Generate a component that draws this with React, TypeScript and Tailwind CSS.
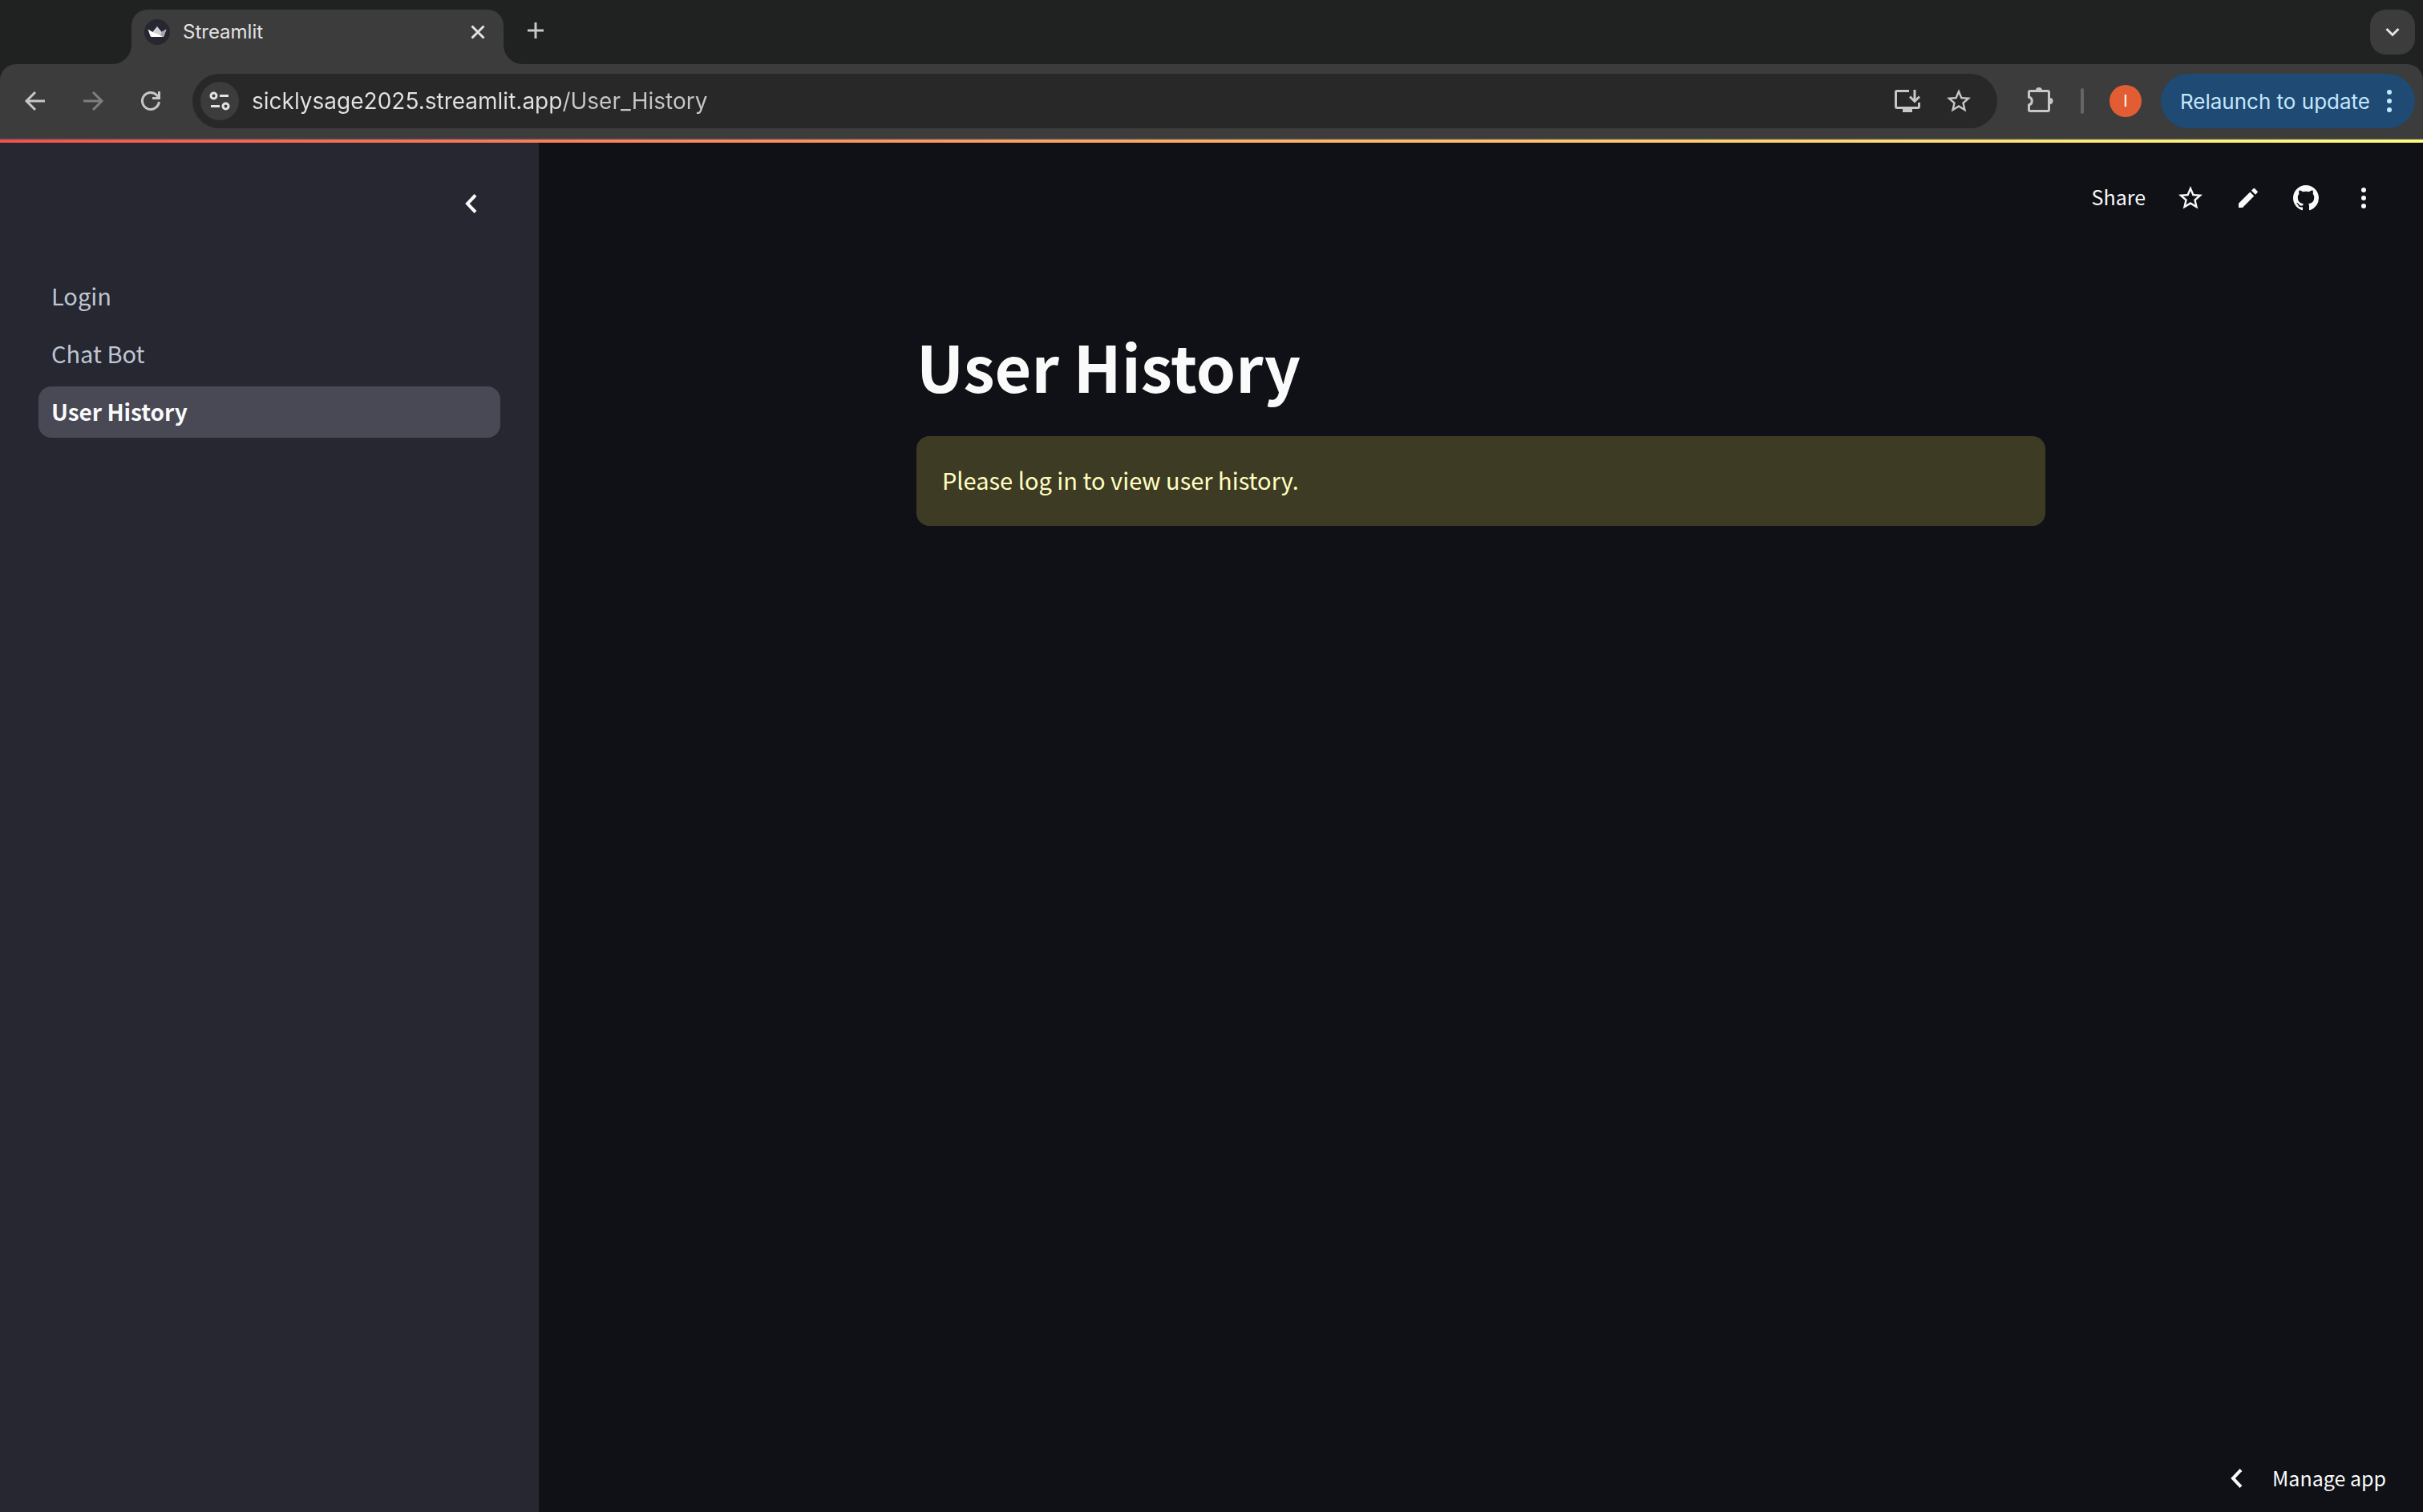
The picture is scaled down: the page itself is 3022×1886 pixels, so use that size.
import React, { useState } from "react";

interface IconProps {
  size: number;
  className?: string;
  children: React.ReactNode;
}

// Shared wrapper, every icon is drawn on a grid of its own pixel size
const Icon = ({ size, className = "", children }: IconProps) => (
  <svg
    width={size}
    height={size}
    viewBox={`0 0 ${size} ${size}`}
    fill="none"
    stroke="currentColor"
    strokeWidth="3"
    className={`shrink-0 ${className}`}
    aria-hidden="true"
  >
    {children}
  </svg>
);

const Dots = ({ gap, r }: { gap: number; r: number }) => (
  <Icon size={32}>
    <g fill="currentColor" stroke="none">
      <circle cx="16" cy={16 - gap} r={r} />
      <circle cx="16" cy="16" r={r} />
      <circle cx="16" cy={16 + gap} r={r} />
    </g>
  </Icon>
);

const ChevronLeft = () => (
  <Icon size={32}>
    <path d="M21 5.5 11 16l10 10.5" strokeWidth="4" />
  </Icon>
);

const Star = () => (
  <svg
    width="36"
    height="36"
    viewBox="0 0 24 24"
    fill="currentColor"
    className="-mx-0.5 max-w-none"
    aria-hidden="true"
  >
    <path d="M22 9.240l-7.190-.62L12 2 9.190 8.630 2 9.240l5.460 4.730L5.820 21 12 17.270 18.180 21l-1.630-7.030L22 9.240zM12 15.400l-3.760 2.270 1-4.280-3.320-2.880 4.380-.38L12 6.100l1.710 4.040 4.380.38-3.320 2.880 1 4.280L12 15.400z" />
  </svg>
);

const TabStrip = () => (
  <div className="flex h-20 items-end bg-[#202221] pr-[10px]">
    {/* space for the window buttons */}
    <div className="w-35 shrink-0" />
    <div className="size-6 bg-[#3c3c3c]">
      <div className="size-6 rounded-br-3xl bg-[#202221]" />
    </div>
    <div className="flex h-17 w-116 items-center rounded-t-[20px] bg-[#3c3c3c] pb-3 pl-4 pr-4">
      <svg width="32" height="32" viewBox="0 0 32 32" className="shrink-0" aria-hidden="true">
        <circle cx="16" cy="16" r="16" fill="#262730" />
        <path d="M4.500 12.500 10.500 16 16 9.200l5.500 6.800 6-3.500L24.500 21q-.4 1-1.500 1H9q-1.100 0-1.500-1z" fill="#fff" />
        <path d="M10.500 16 16 9.200l5.500 6.800-1.500 4z" fill="#d0d0d4" />
        <path d="M27.500 12.500 24.500 21q-.4 1-1.500 1l-3-2 1.500-4z" fill="#a3a3a8" />
      </svg>
      <span className="ml-4 flex-1 text-2xl text-[#e3e3e3]">Streamlit</span>
      <button aria-label="Close tab" className="text-[#e3e3e3]">
        <Icon size={32}>
          <path d="m8.500 8.500 15 15m0-15-15 15" />
        </Icon>
      </button>
    </div>
    <div className="size-6 bg-[#3c3c3c]">
      <div className="size-6 rounded-bl-3xl bg-[#202221]" />
    </div>
    <button aria-label="New tab" className="mb-[26px] text-[#c7c7c7]">
      <Icon size={32}>
        <path d="M16 6v20M6 16h20" />
      </Icon>
    </button>
    <button
      aria-label="Search tabs"
      className="mb-3 ml-auto flex size-14 items-center justify-center rounded-[20px] bg-[#3c3c3c] text-[#e3e3e3]"
    >
      <Icon size={32}>
        <path d="m8.500 12 7.500 7.500 7.500-7.500" />
      </Icon>
    </button>
  </div>
);

const Toolbar = () => {
  const [url, setUrl] = useState("sicklysage2025.streamlit.app/User_History");

  return (
    <div className="bg-[#202221]">
      <div className="flex h-[94px] items-center gap-6 rounded-t-[20px] border-b-2 border-[#474747] bg-[#3c3c3c] pl-6 pr-[10px] text-[#c7c7c7]">
        <div className="flex gap-8">
          <button aria-label="Back" className="flex size-10 items-center justify-center">
            <Icon size={32}>
              <path d="M28 16H6M16 5 5 16l11 11" />
            </Icon>
          </button>
          <button aria-label="Forward" className="flex size-10 items-center justify-center text-[#7f7f7f]">
            <Icon size={32}>
              <path d="M4 16h22M16 5l11 11-11 11" />
            </Icon>
          </button>
          <button aria-label="Reload" className="flex size-10 items-center justify-center">
            <Icon size={32}>
              <path d="M26.400 17A10.500 10.500 0 1 1 23.500 8.600L26 12" />
              <path d="M26.500 4v8.500H18" />
            </Icon>
          </button>
        </div>
        <div className="ml-2 flex h-17 flex-1 items-center rounded-full bg-[#282828] pl-[10px] pr-8">
          <button
            aria-label="View site information"
            className="flex size-12 items-center justify-center rounded-full bg-[#3c3c3c] text-[#e3e3e3]"
          >
            <Icon size={32}>
              <circle cx="8.500" cy="9.500" r="3.500" />
              <path d="M16 9.500h11M5 22.500h11" />
              <circle cx="23.500" cy="22.500" r="3.500" />
            </Icon>
          </button>
          {/* host is brighter than the path */}
          <input
            type="text"
            aria-label="Address and search bar"
            value={url}
            onChange={(e) => setUrl(e.target.value)}
            className="ml-4 flex-1 bg-linear-to-r from-[#e3e3e3] from-[386px] to-[#c7c7c7] to-[386px] bg-clip-text text-[28px] text-transparent caret-white outline-none"
          />
          <div className="flex items-center gap-8">
            <button aria-label="Install app">
              <Icon size={32}>
                <path d="M18 3.500H3Q1.500 3.500 1.500 5v17.500Q1.500 24.500 3 24.500h26q1.500 0 1.500-1.500V18" />
                <path d="M25 2v14M19 10.500l6 6 6-6" />
                <path d="M10 27h12" strokeWidth="6" />
              </Icon>
            </button>
            <button aria-label="Bookmark this tab">
              <Star />
            </button>
          </div>
        </div>
        <div className="ml-3 flex items-center gap-8">
          <button aria-label="Extensions">
            <Icon size={36}>
              <path d="M3.500 7q0-1.500 1.500-1.500h22q1.500 0 1.500 1.500v22q0 1.500-1.500 1.500H5q-1.500 0-1.500-1.500v-6a5.200 5.200 0 0 0 0-10z" />
              <path d="M12 5a4 4 0 0 1 8 0zM29.500 14a4 4 0 0 1 0 8z" fill="currentColor" stroke="none" />
            </Icon>
          </button>
          <div className="h-8 w-1 rounded-full bg-[#666]" />
          <button
            aria-label="Profile"
            className="flex size-10 items-center justify-center rounded-full bg-[#e25d33] text-xl text-white"
          >
            I
          </button>
        </div>
        <button className="flex h-17 items-center gap-2 rounded-full bg-[#1f4a73] pl-6 pr-4 text-[26px] text-[#c2e7ff]">
          Relaunch to update
          <Dots gap={11} r={3} />
        </button>
      </div>
    </div>
  );
};

const pages = ["Login", "Chat Bot", "User History"];

const Sidebar = () => {
  const [active, setActive] = useState("User History");

  return (
    <aside className="flex w-168 shrink-0 flex-col bg-[#262730] px-12 pt-15">
      <button aria-label="Collapse sidebar" className="mr-5 self-end text-[#fafafa]">
        <ChevronLeft />
      </button>
      <nav className="mt-17 flex flex-col gap-2">
        {pages.map((page) => (
          <a
            key={page}
            href="#"
            onClick={() => setActive(page)}
            className={
              page === active
                ? "flex h-16 items-center rounded-2xl bg-[#484954] px-4 pb-0.5 text-[28px] font-bold text-[#fafafa]"
                : "flex h-16 items-center rounded-2xl px-4 pb-0.5 text-[29px] text-[#bfc5d3]"
            }
          >
            {page}
          </a>
        ))}
      </nav>
    </aside>
  );
};

const AppHeader = () => (
  <header className="flex h-[138px] items-center justify-end gap-10 pr-[58px] text-[#fafafa]">
    <button className="pb-0.5 text-[25px]">Share</button>
    <button aria-label="Favorite">
      <Star />
    </button>
    <button aria-label="Edit">
      <Icon size={32}>
        <path
          d="M4 22.700V28h5L23.300 13.400l-5-5zM27.400 9.300a1.300 1.300 0 0 0 0-1.900l-3.100-3.100a1.300 1.300 0 0 0-1.900 0L20 6.700l5 5z"
          fill="currentColor"
          stroke="none"
        />
      </Icon>
    </button>
    <button aria-label="View source on GitHub">
      <svg width="32" height="32" viewBox="0 0 16 16" fill="currentColor" aria-hidden="true">
        <path d="M8 0C3.580 0 0 3.580 0 8c0 3.540 2.290 6.530 5.470 7.590.4.070.55-.17.55-.38 0-.19-.01-.82-.01-1.490-2.010.37-2.530-.49-2.690-.94-.09-.23-.48-.94-.82-1.130-.28-.15-.68-.52-.01-.53.63-.01 1.080.58 1.230.82.72 1.210 1.870.87 2.330.66.07-.52.28-.87.51-1.070-1.780-.2-3.640-.89-3.640-3.950 0-.87.31-1.590.82-2.150-.08-.2-.36-1.020.08-2.120 0 0 .67-.21 2.200.82.64-.18 1.320-.27 2-.27s1.360.09 2 .27c1.530-1.040 2.200-.82 2.200-.82.44 1.100.16 1.920.08 2.120.51.56.82 1.270.82 2.150 0 3.070-1.870 3.750-3.650 3.950.29.25.54.73.54 1.480 0 1.070-.01 1.930-.01 2.200 0 .21.15.46.55.38A8.010 8.010 0 0 0 16 8c0-4.420-3.580-8-8-8" />
      </svg>
    </button>
    <button aria-label="More options">
      <Dots gap={10} r={3} />
    </button>
  </header>
);

export default function App() {
  return (
    <div className="flex min-h-screen flex-col bg-[#0f1116] font-[Inter,sans-serif]">
      <TabStrip />
      <Toolbar />
      <div className="h-1 bg-linear-to-r from-[#f0524f] to-[#fffd80]" />
      <div className="flex flex-1 font-['Noto_Sans_CJK_SC',sans-serif]">
        <Sidebar />
        <div className="flex flex-1 flex-col">
          <AppHeader />
          <main className="mx-auto w-full max-w-352 flex-1 pt-23">
            <h1 className="text-[79px] leading-24 font-bold text-[#fafafa]">User History</h1>
            <div
              role="alert"
              className="mt-10 flex h-28 items-center rounded-2xl bg-[#3e3b24] px-8 pb-0.5 text-[29px] text-[#ffffc2]"
            >
              Please log in to view user history.
            </div>
          </main>
          <footer className="flex h-21 items-center justify-end pr-[46px] text-[#fafafa]">
            <button className="flex items-center gap-7 text-[25px]">
              <ChevronLeft />
              Manage app
            </button>
          </footer>
        </div>
      </div>
    </div>
  );
}
